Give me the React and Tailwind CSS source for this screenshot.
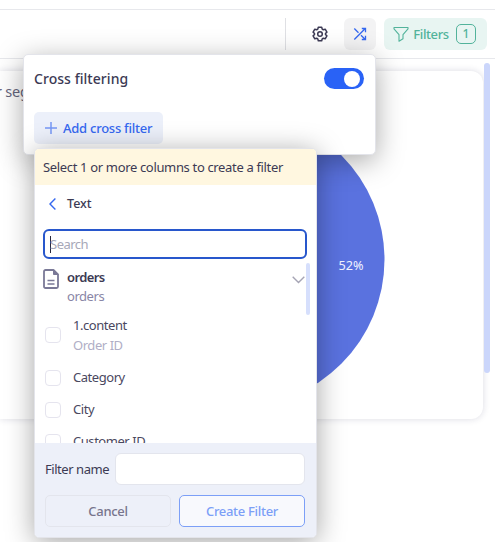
import React from "react";

function Label({ className = "", children }) {
  return (
    <span className={`block whitespace-nowrap leading-5 ${className}`}>{children}</span>
  );
}

function Toolbar() {
  return (
    <header className="mt-[9px] flex h-[50px] items-start justify-end border-y border-[#e7e8ec] pt-2 pr-2">
      <div className="h-8 w-px bg-[#dfe0e4]" />
      <button className="ml-[18px] flex h-8 w-8 items-center justify-center">
        <svg width="16" height="16" viewBox="0 0 16 16" fill="none" stroke="#3c3a54" strokeWidth="1.5" strokeLinejoin="round">
          <path d="M6.3 1.2h3.4l.5 1.9 1.1.65 1.9-.55 1.7 2.9-1.4 1.35v1.1l1.4 1.35-1.7 2.9-1.9-.55-1.1.65-.5 1.9H6.3l-.5-1.9-1.1-.65-1.9.55-1.7-2.9 1.4-1.35v-1.1L1.1 6.1l1.7-2.9 1.9.55 1.1-.65z" />
          <circle cx="8" cy="8" r="2.3" />
        </svg>
      </button>
      <button className="ml-2 flex h-8 w-8 items-center justify-center rounded-md bg-[#f3f3f4]">
        <svg width="14" height="14" viewBox="0 0 14 14" fill="none" stroke="#3568f0" strokeWidth="1.3">
          <path d="M1.3 1.5l4.2 4.2M8 8.2l4.3 4.3M1.3 12.5l11-11M8.8 1.5h3.7v3.7M12.5 8.8v3.7H8.8" />
        </svg>
      </button>
      <button className="ml-2 flex h-8 w-[103px] items-center rounded-md bg-[#e8f5f2] pl-[9px] text-[#52b39b]">
        <svg width="16" height="16" viewBox="0 0 16 16" fill="none" stroke="currentColor" strokeWidth="1.1" strokeLinejoin="round">
          <path d="M1 1.5h14v1.3L10 8.6v4.2l-4 2.4V8.6L1 2.8z" />
        </svg>
        <Label className="ml-1 w-[36px] text-[13px] font-medium tracking-[-0.4px]">Filters</Label>
        <span className="ml-[7px] flex h-5 w-5 items-center justify-center rounded-[5px] border border-[#52b39b] text-[12px] font-medium">1</span>
      </button>
    </header>
  );
}

function Dashboard() {
  return (
    <main className="flex h-[483px] pt-1">
      <section className="mt-2 h-[348px] w-[483px] overflow-hidden rounded-r-xl bg-white shadow-[0_0_7px_rgba(30,30,80,0.16)]">
        <svg width="483" height="348">
          <circle cx="237" cy="188.5" r="147.5" fill="#5a72df" />
          <text x="338.5" y="199" fill="#f1f3ff" fontSize="12.5" textLength="25" lengthAdjust="spacingAndGlyphs">52%</text>
          <text x="-4" y="26" fill="#66667d" fontSize="14.5" textLength="33">r seg</text>
        </svg>
      </section>
      <div className="ml-px h-[310px] w-1.5 rounded-full bg-[#cbd6fb]" />
    </main>
  );
}

function CrossFiltering() {
  return (
    <section className="absolute top-[54px] left-[23px] h-[101px] w-[353px] rounded-[5px] border border-[#e3e4ea] bg-white px-2.5 pt-[13px] shadow-[0_6px_28px_rgba(0,0,0,0.34)]">
      <div className="flex h-[21px] items-center justify-between">
        <Label className="text-[14px] font-medium tracking-[0.05px] text-[#3c3a54]">Cross filtering</Label>
        <span className="mr-px flex h-[21px] w-10 items-center justify-end rounded-full bg-[#2962f6] pr-1">
          <span className="h-4 w-4 rounded-full bg-white" />
        </span>
      </div>
      <button className="mt-[23px] flex h-8 w-[129px] items-center rounded-[5px] bg-[#ecf0fa] pl-[11px] text-[#3568f0]">
        <svg width="12" height="12" viewBox="0 0 12 12" stroke="#7597f5" strokeWidth="1.5"><path d="M0 6h12M6 0v12" /></svg>
        <Label className="ml-1.5 text-[13px] font-medium tracking-[-0.25px]">Add cross filter</Label>
      </button>
    </section>
  );
}

function Check({ children, className = "" }) {
  return (
    <div className={`flex items-center ${className}`}>
      <span className="h-4 w-4 shrink-0 rounded border border-[#e5e4ee] bg-white" />
      <div className="ml-3 text-[13px] tracking-[-0.45px] text-[#4a485f]">{children}</div>
    </div>
  );
}

function ColumnPicker() {
  return (
    <section className="absolute top-[148px] left-[34px] flex h-[390px] w-[283px] flex-col overflow-hidden rounded-[5px] border border-[#e3e4ea] bg-white shadow-[0_4px_28px_rgba(0,0,0,0.36)]">
      <div className="flex h-9 shrink-0 items-center bg-[#fff7e0] pl-2">
        <Label className="text-[13px] tracking-[-0.34px] text-[#3c3a54]">Select 1 or more columns to create a filter</Label>
      </div>
      <div className="flex h-[37px] shrink-0 items-center pl-[14px]">
        <svg width="7" height="12" viewBox="0 0 7 12" fill="none" stroke="#3568f0" strokeWidth="1.4"><path d="M6.4.6L1 6l5.4 5.4" /></svg>
        <Label className="ml-[11px] text-[12.5px] font-medium text-[#3c3a54]">Text</Label>
      </div>
      <div className="mt-[7px] ml-2 flex h-[30px] w-[264px] shrink-0 items-center rounded-md border-2 border-[#2857cc] pl-[5px]">
        <span className="h-[17px] w-px bg-[#29283b]" />
        <Label className="-ml-px text-[13px] tracking-[-0.5px] text-[#a7a8b8]">Search</Label>
      </div>
      <div className="mt-1 flex h-[180px] shrink-0 overflow-hidden pl-2">
        <div className="w-[263px]">
          <div className="flex pt-1">
            <svg className="mt-0.5" width="16" height="20" viewBox="0 0 16 20" fill="none" stroke="#7a7997" strokeWidth="1.8" strokeLinejoin="round">
              <path d="M2.5 1h8L15 5.5v12A1.5 1.5 0 0 1 13.5 19h-11A1.5 1.5 0 0 1 1 17.5v-15A1.5 1.5 0 0 1 2.5 1z" />
              <path d="M4.5 11.5h7M4.5 15h7" strokeWidth="1.5" />
              <path d="M10.5 1v4.5H15z" fill="#7a7997" strokeWidth="1" />
            </svg>
            <div className="ml-2 flex-1">
              <Label className="text-[13px] font-semibold tracking-[-0.6px] text-[#3c3a54]">orders</Label>
              <Label className="-mt-px text-[13px] tracking-[-0.45px] text-[#8986a6]">orders</Label>
            </div>
            <svg className="mt-[9px] mr-px" width="13" height="8" viewBox="0 0 13 8" fill="none" stroke="#a5a4b4" strokeWidth="1.4"><path d="M.7.7l5.8 5.8L12.3.7" /></svg>
          </div>
          <div className="pl-0.5">
            <Check className="mt-[9px] h-10">
              <Label>1.content</Label>
              <Label className="text-[#b0aec6]">Order ID</Label>
            </Check>
            <Check className="mt-[7px] h-8">Category</Check>
            <Check className="h-8">City</Check>
            <Check className="h-8">Customer ID</Check>
          </div>
        </div>
        <div className="h-[52px] w-1 rounded-full bg-[#d6dffc]" />
      </div>
      <footer className="flex-1 bg-[#edf0f9] px-2.5 pt-2.5">
        <div className="flex items-center">
          <Label className="w-[70px] text-[13px] tracking-[-0.45px] text-[#3c3a54]">Filter name</Label>
          <div className="h-8 w-[190px] rounded-md border border-[#e3e5ed] bg-white" />
        </div>
        <div className="mt-2.5 flex gap-2">
          <button className="h-8 w-[126px] rounded-[5px] border border-[#e3e5ed] pt-0.5 text-[13px] font-medium tracking-[-0.3px] text-[#77758d]">Cancel</button>
          <button className="h-8 w-[126px] rounded-[5px] border border-[#7c9ff7] bg-[#f8f9fd] pt-0.5 text-[13px] font-medium tracking-[-0.3px] text-[#7c9ff7]">Create Filter</button>
        </div>
      </footer>
    </section>
  );
}

export default function App() {
  return (
    <div className="relative flow-root h-[542px] w-[495px] overflow-hidden bg-white font-['Noto_Sans',sans-serif]">
      <Toolbar />
      <Dashboard />
      <CrossFiltering />
      <ColumnPicker />
    </div>
  );
}
